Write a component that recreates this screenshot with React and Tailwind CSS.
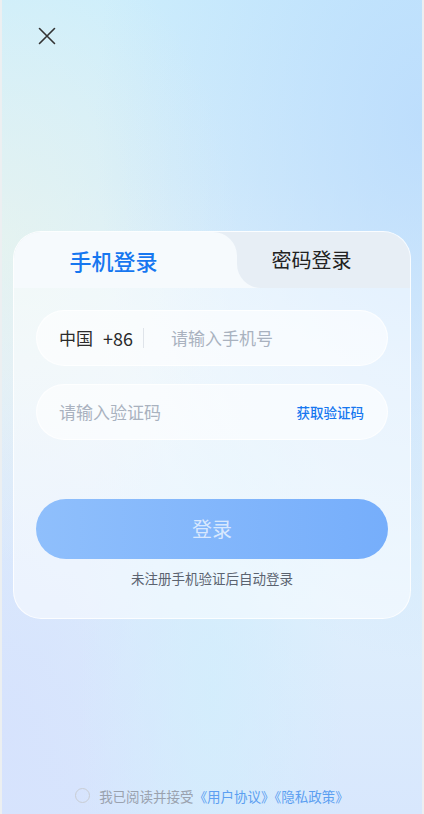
import React, { useState } from "react";

export default function App() {
  const [tab, setTab] = useState("phone");
  const [agree, setAgree] = useState(false);

  return (
    <div className="min-h-[814px] w-full bg-[#eceff1] px-[2px] font-['Noto_Sans_CJK_SC','Noto_Sans',sans-serif]">
      <div className="relative flex min-h-[814px] flex-col bg-[linear-gradient(180deg,#cdeefc_0%,#d6eefb_22%,#e6f2fb_45%,#dff0fc_70%,#d8e7fd_100%)]">
        <div className="pointer-events-none absolute inset-0 bg-[radial-gradient(ellipse_at_100%_15%,rgba(180,215,253,0.7),transparent_55%),radial-gradient(ellipse_at_0%_30%,rgba(232,244,236,0.7),transparent_40%),radial-gradient(ellipse_at_50%_85%,rgba(210,238,252,0.8),transparent_45%),radial-gradient(ellipse_at_0%_90%,rgba(214,226,253,0.9),transparent_50%)]" />

        <div className="relative flex h-[72px] items-center pl-[35px]">
          <button className="flex h-[20px] w-[20px] items-center justify-center text-[#333]">
            <svg viewBox="0 0 20 20" className="h-[20px] w-[20px]" fill="none" stroke="currentColor" strokeWidth="1.6" strokeLinecap="round">
              <path d="M2.5 2.5l15 15M17.5 2.5l-15 15" />
            </svg>
          </button>
        </div>

        <div className="relative mx-[11px] mt-[159px] overflow-hidden rounded-[28px] border border-white/80 bg-white/50 pb-[30px]">
          <div className="flex h-[56px]">
            <div className="w-[223px] bg-[#e7eef5]">
              <button
                onClick={() => setTab("phone")}
                className="flex h-full w-full items-center justify-center rounded-tr-[24px] bg-[#f6fafd] pr-[24px] text-[22px] font-medium text-[#1677f0]"
              >
                手机登录
              </button>
            </div>
            <div className="flex-1 bg-[#f6fafd]">
              <button
                onClick={() => setTab("password")}
                className="flex h-full w-full items-center justify-center rounded-bl-[24px] bg-[#e7eef5] pr-[24px] text-[20px] text-[#222]"
              >
                密码登录
              </button>
            </div>
          </div>

          <div className="px-[22px] pt-[22px]">
            <div className="flex h-[56px] items-center rounded-full border border-white/80 bg-white/60 px-[22px]">
              <span className="text-[17px] text-[#2b2b2b]">中国</span>
              <span className="ml-[10px] text-[18px] text-[#2b2b2b]">+86</span>
              <span className="ml-[10px] h-[20px] w-px bg-[#dfe4ea]" />
              <input
                className="ml-[27px] min-w-0 flex-1 bg-transparent text-[17px] text-[#222] outline-none placeholder:text-[#a9b2bf]"
                placeholder="请输入手机号"
              />
            </div>

            <div className="mt-[18px] flex h-[56px] items-center rounded-full border border-white/80 bg-white/60 pl-[22px] pr-[23px]">
              <input
                className="min-w-0 flex-1 bg-transparent text-[17px] text-[#222] outline-none placeholder:text-[#a9b2bf]"
                placeholder="请输入验证码"
              />
              <button className="text-[13.5px] font-medium text-[#1677f0]">获取验证码</button>
            </div>

            <button className="mt-[59px] flex h-[60px] w-full items-center justify-center rounded-full bg-[linear-gradient(90deg,#8fbffc,#76aefb)] text-[20px] text-white/70">
              登录
            </button>

            <p className="mt-[9px] text-center text-[13.5px] text-[#5b6370]">未注册手机验证后自动登录</p>
          </div>
        </div>

        <div className="flex-1" />

        <div className="relative flex items-center justify-center pb-[8px]">
          <button
            onClick={() => setAgree(!agree)}
            className={`h-[15px] w-[15px] rounded-full border ${agree ? "border-[#1677f0] bg-[#1677f0]" : "border-[#c9cdd3]"}`}
          />
          <span className="ml-[9px] text-[13.5px] text-[#9aa2ae]">
            我已阅读并接受<span className="text-[#5c9ff1]">《用户协议》《隐私政策》</span>
          </span>
        </div>
      </div>
    </div>
  );
}
